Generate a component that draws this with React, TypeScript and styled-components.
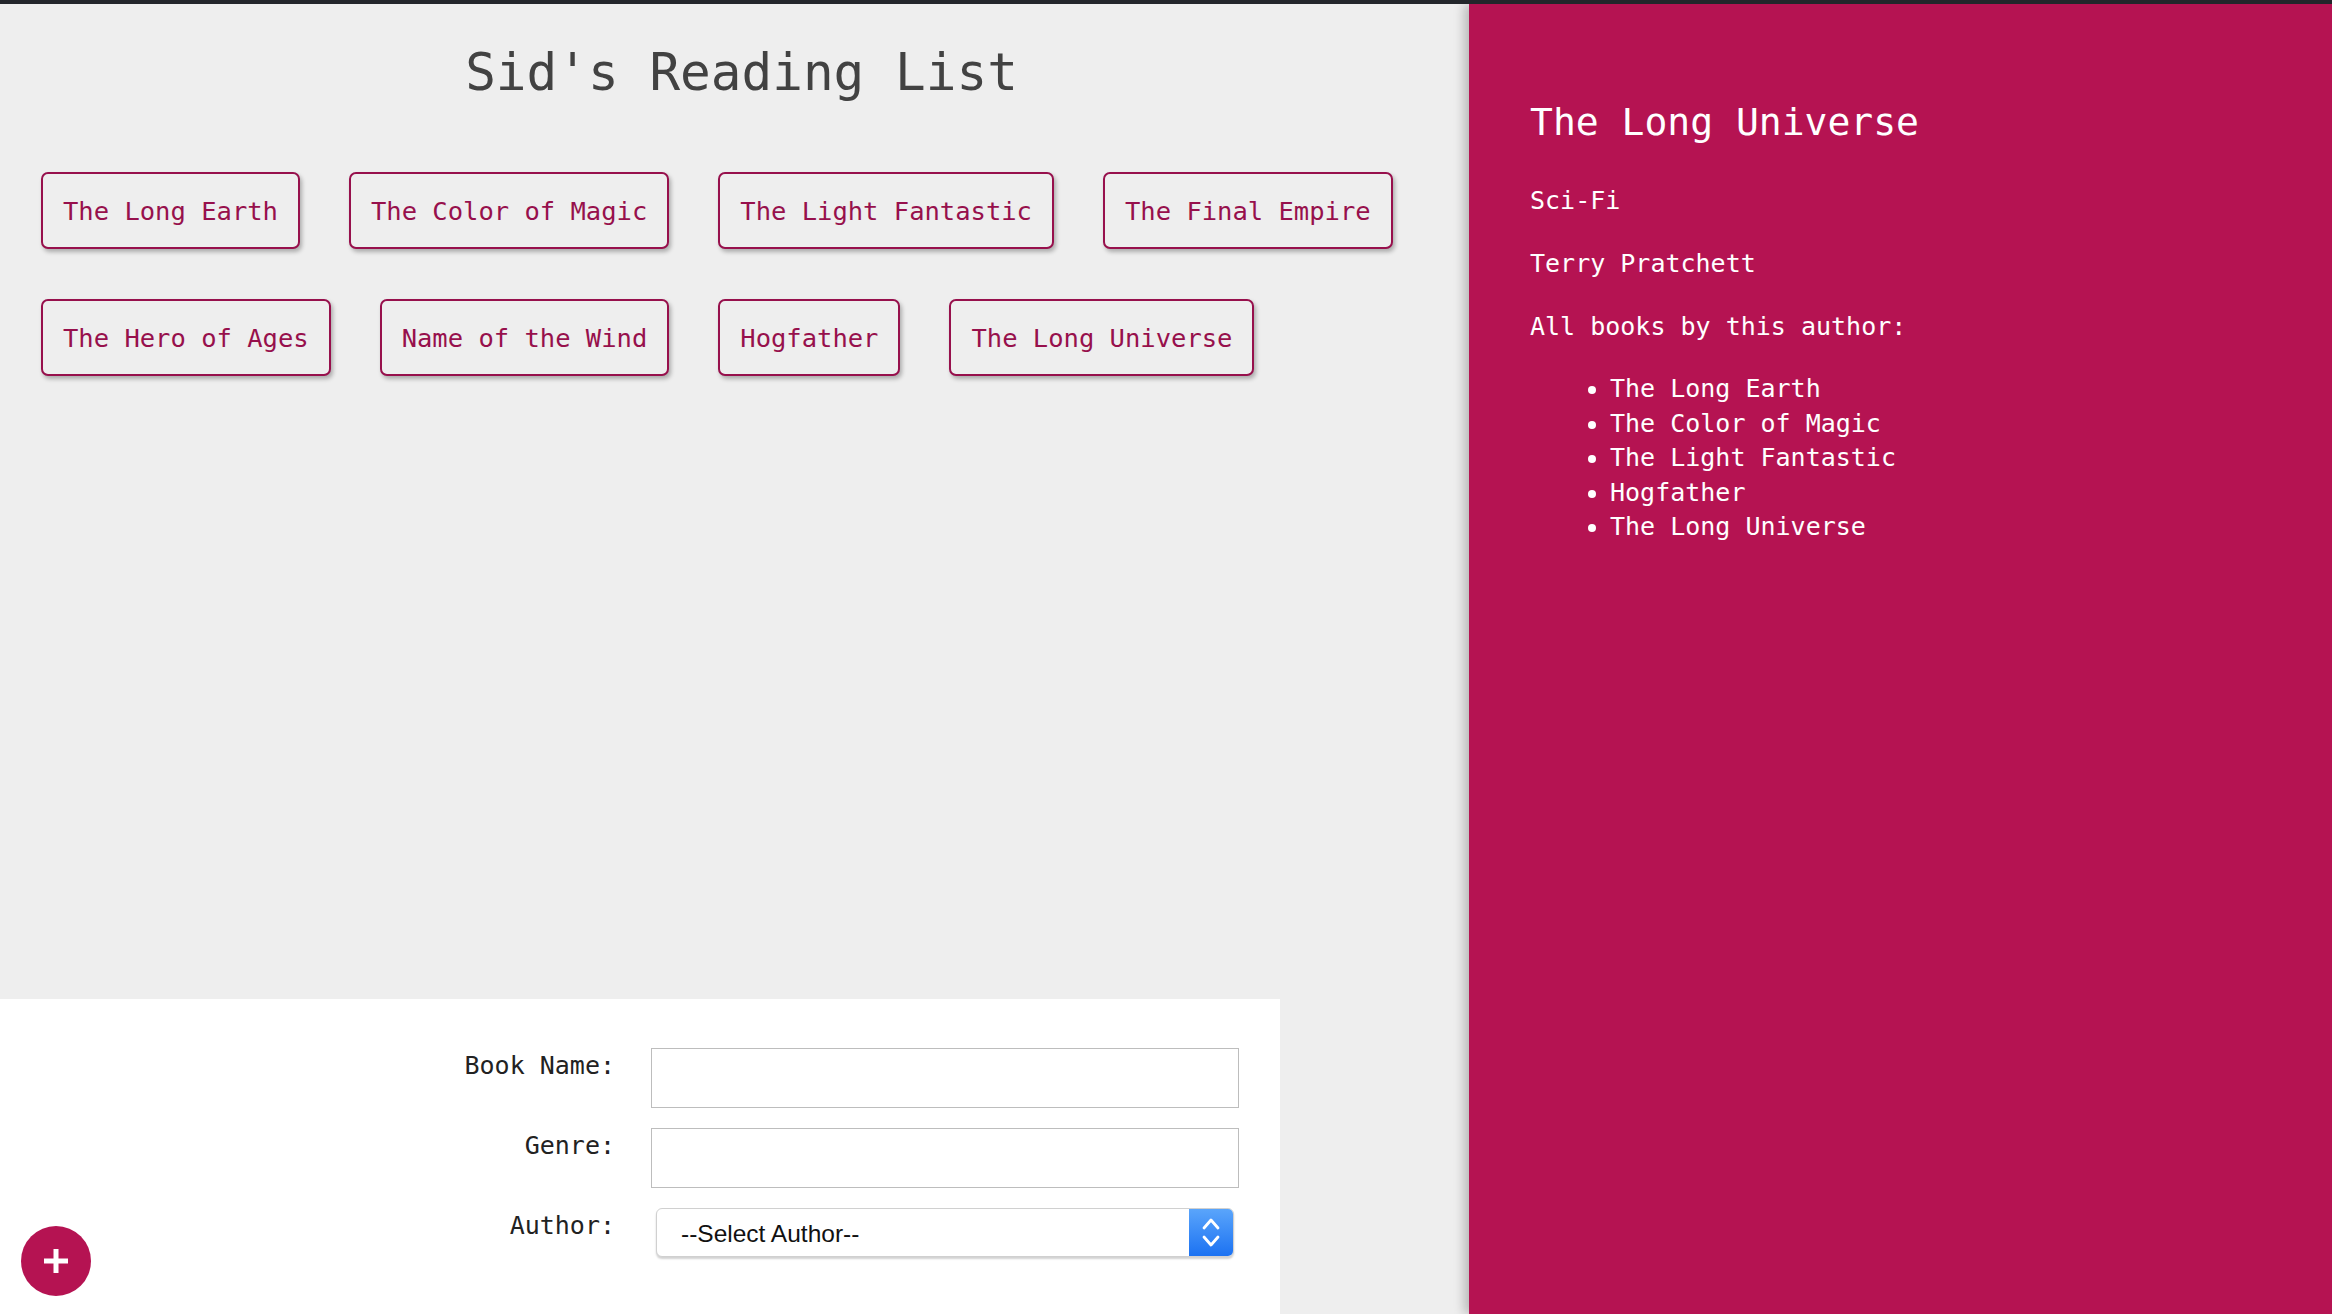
import React from 'react';
import styled, { createGlobalStyle } from 'styled-components';

const GlobalStyle = createGlobalStyle`
  html, body {
    margin: 0;
    padding: 0;
    background: #eeeeee;
  }
  * {
    box-sizing: border-box;
  }
`;

const books = [
  'The Long Earth',
  'The Color of Magic',
  'The Light Fantastic',
  'The Final Empire',
  'The Hero of Ages',
  'Name of the Wind',
  'Hogfather',
  'The Long Universe',
];

const authorBooks = [
  'The Long Earth',
  'The Color of Magic',
  'The Light Fantastic',
  'Hogfather',
  'The Long Universe',
];

const mono = `"DejaVu Sans Mono", "Liberation Mono", monospace`;

const Page = styled.div`
  position: relative;
  width: 100%;
  height: 100vh;
  display: flex;
  flex-direction: column;
  border-top: 4px solid #23262b;
  font-family: ${mono};
  overflow: hidden;
`;

const Columns = styled.div`
  flex: 1;
  display: grid;
  grid-template-columns: 1469px 1fr;
  min-height: 0;
`;

const ListColumn = styled.div`
  display: flex;
  flex-direction: column;
  background: #eeeeee;
`;

const Title = styled.h1`
  margin: 39px 0 0;
  padding-left: 14px;
  text-align: center;
  font-size: 51px;
  font-weight: normal;
  color: #424242;
  line-height: 59px;
`;

const BookList = styled.ul`
  list-style: none;
  margin: 0;
  padding: 70px 41px 0 41px;
  display: flex;
  flex-wrap: wrap;
  gap: 50px 49px;
`;

const BookButton = styled.li`
  padding: 21.5px 20px;
  border: 2px solid #97104c;
  border-radius: 7px;
  background: #eeeeee;
  color: #97104c;
  font-size: 25.5px;
  line-height: 30px;
  white-space: nowrap;
  cursor: pointer;
  box-shadow: 2px 3px 4px rgba(0, 0, 0, 0.28);
`;

const Spacer = styled.div`
  flex: 1;
`;

const FormPanel = styled.form`
  width: 1280px;
  height: 315px;
  background: #ffffff;
  padding: 49px 41px 0 0;
  display: grid;
  grid-template-columns: 1fr 588px;
  grid-template-rows: 60px 60px 49px;
  column-gap: 36px;
  row-gap: 20px;
  align-items: start;
`;

const FieldLabel = styled.label`
  text-align: right;
  font-size: 25px;
  line-height: 35px;
  color: #222222;
`;

const TextInput = styled.input`
  width: 100%;
  height: 60px;
  border: 1.5px solid #bdbdbd;
  background: #ffffff;
  font-family: ${mono};
  font-size: 22px;
  padding: 0 12px;
  outline: none;
`;

const SelectBox = styled.div`
  justify-self: center;
  width: 578px;
  height: 49px;
  display: flex;
  border: 1px solid #d0d0d0;
  border-radius: 6px;
  background: #ffffff;
  box-shadow: 0 2px 2px rgba(0, 0, 0, 0.18);
  overflow: hidden;
`;

const NativeSelect = styled.select`
  flex: 1;
  appearance: none;
  border: none;
  background: transparent;
  padding: 2px 0 0 24px;
  font-family: "Liberation Sans", Arial, sans-serif;
  font-size: 24.5px;
  color: #111111;
  outline: none;
`;

const Stepper = styled.div`
  width: 44px;
  display: flex;
  flex-direction: column;
  align-items: center;
  justify-content: center;
  gap: 5px;
  background: linear-gradient(180deg, #5aa5fb 0%, #1c72f2 100%);
`;

const AddButton = styled.button`
  position: absolute;
  left: 21px;
  bottom: 18px;
  width: 70px;
  height: 70px;
  border-radius: 50%;
  border: none;
  background: #b51352;
  display: flex;
  align-items: center;
  justify-content: center;
  cursor: pointer;
  padding: 0;
`;

const DetailPanel = styled.aside`
  background: #b51352;
  color: #ffffff;
  padding: 96px 40px 0 61px;
  box-shadow: -5px 0 10px rgba(0, 0, 0, 0.22);
  z-index: 1;
`;

const DetailTitle = styled.h2`
  margin: 0 0 39px;
  font-size: 38px;
  font-weight: normal;
  line-height: 44px;
`;

const DetailText = styled.p`
  margin: 0 0 28px;
  font-size: 25px;
  line-height: 35px;
`;

const AuthorBooks = styled.ul`
  margin: 0;
  padding-left: 80px;
  font-size: 25px;
  line-height: 34.5px;
`;

const Chevron: React.FC<{ up?: boolean }> = ({ up }) => (
  <svg width="20" height="13" viewBox="0 0 20 13">
    <path
      d={up ? 'M3 11 L10 3 L17 11' : 'M3 2 L10 10 L17 2'}
      fill="none"
      stroke="#ffffff"
      strokeWidth="2.8"
      strokeLinecap="round"
      strokeLinejoin="round"
    />
  </svg>
);

export default function App() {
  return (
    <>
      <GlobalStyle />
      <Page>
        <Columns>
          <ListColumn>
            <Title>Sid's Reading List</Title>
            <BookList>
              {books.map((b) => (
                <BookButton key={b}>{b}</BookButton>
              ))}
            </BookList>
            <Spacer />
            <FormPanel onSubmit={(e) => e.preventDefault()}>
              <FieldLabel htmlFor="book-name">Book Name:</FieldLabel>
              <TextInput id="book-name" type="text" />
              <FieldLabel htmlFor="genre">Genre:</FieldLabel>
              <TextInput id="genre" type="text" />
              <FieldLabel htmlFor="author">Author:</FieldLabel>
              <SelectBox>
                <NativeSelect id="author" defaultValue="">
                  <option value="">--Select Author--</option>
                  <option value="tp">Terry Pratchett</option>
                  <option value="bs">Brandon Sanderson</option>
                  <option value="pr">Patrick Rothfuss</option>
                </NativeSelect>
                <Stepper>
                  <Chevron up />
                  <Chevron />
                </Stepper>
              </SelectBox>
            </FormPanel>
          </ListColumn>
          <DetailPanel>
            <DetailTitle>The Long Universe</DetailTitle>
            <DetailText>Sci-Fi</DetailText>
            <DetailText>Terry Pratchett</DetailText>
            <DetailText>All books by this author:</DetailText>
            <AuthorBooks>
              {authorBooks.map((b) => (
                <li key={b}>{b}</li>
              ))}
            </AuthorBooks>
          </DetailPanel>
        </Columns>
        <AddButton type="button" aria-label="Add book">
          <svg width="30" height="30" viewBox="0 0 30 30">
            <path d="M15 3 V27 M3 15 H27" stroke="#ffffff" strokeWidth="5" />
          </svg>
        </AddButton>
      </Page>
    </>
  );
}
